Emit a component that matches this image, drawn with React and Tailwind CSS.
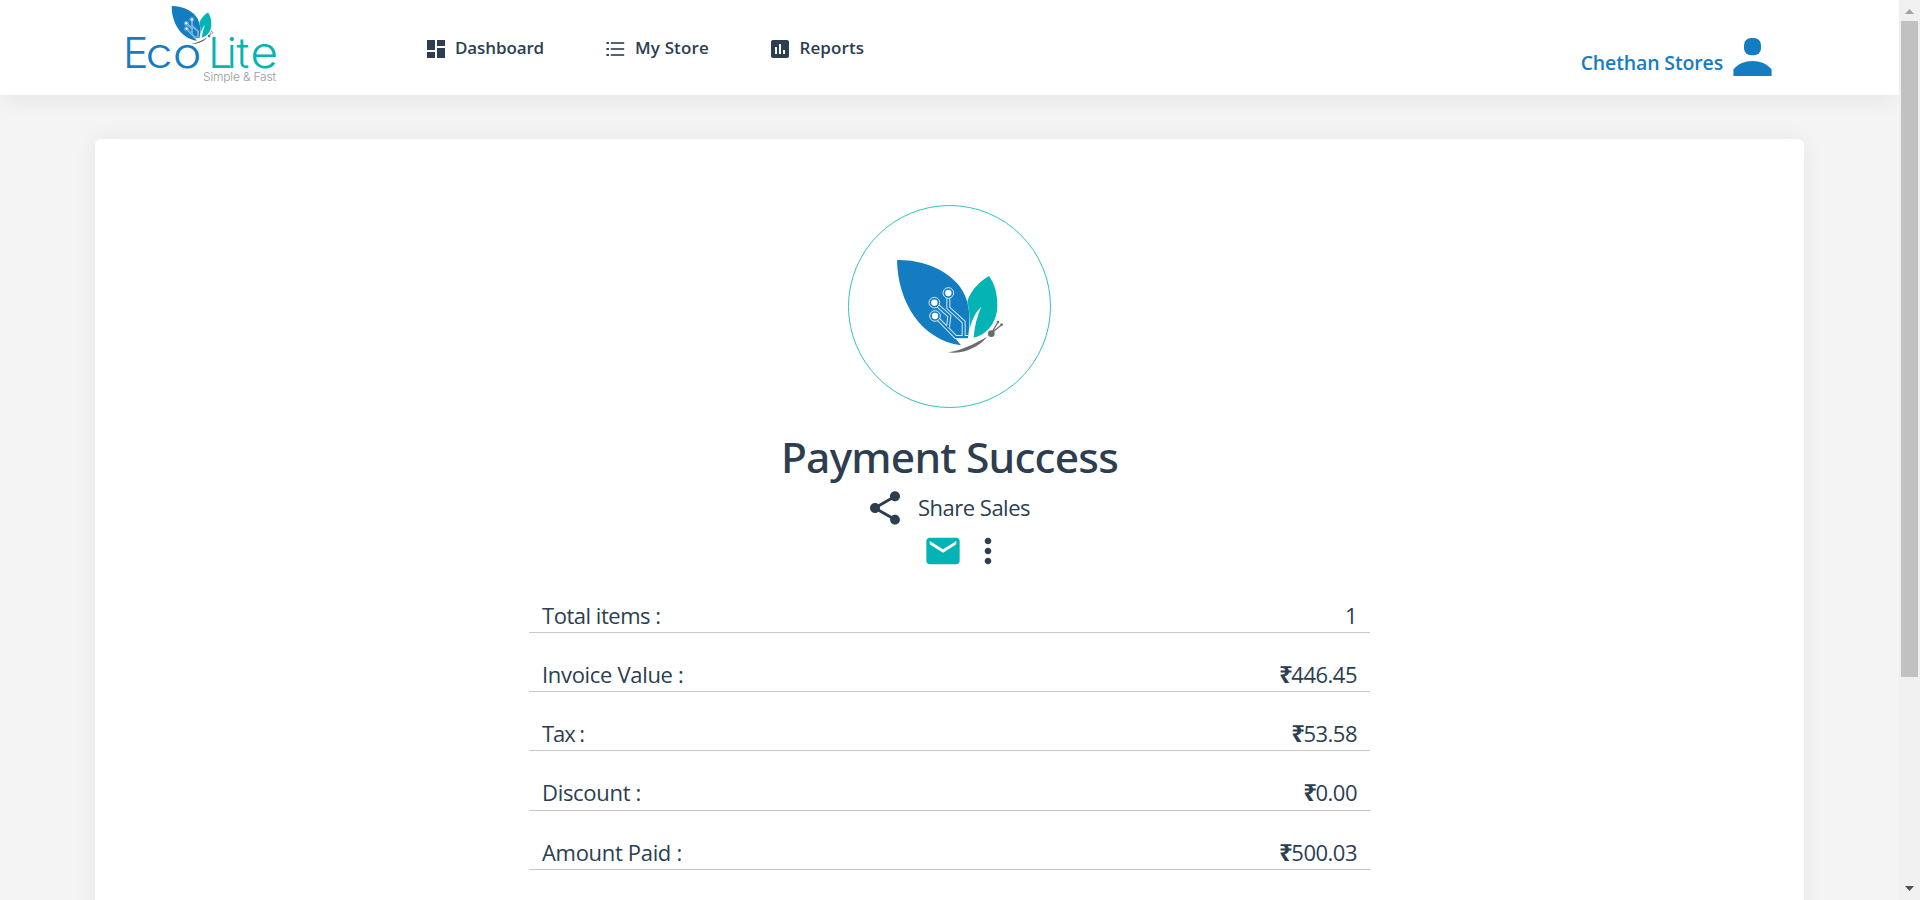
import {
  MdDashboard,
  MdAssessment,
  MdShare,
  MdMail,
  MdMoreVert,
} from "react-icons/md";

function ButterflyShapes() {
  const tracks = [
    "M204 172V204L250 246V291",
    "M173 198L207 228L203 262",
    "M175 239L226 291H263",
  ];
  return (
    <>
      <path
        fill="#147dc2"
        d="M50 60C125 59 195 88 233 133C258 163 268 200 267 240C267 262 265 280 263 293H224L242 316C125 300 52 190 50 60Z"
      />
      <path
        fill="#04b4b5"
        d="M326 108C290 128 265 163 261 186C267 210 269 235 268 268C275 238 285 217 303 200C290 230 282 260 280 293C325 283 352 240 351 195C351 160 343 132 326 108Z"
      />
      {tracks.map((d) => (
        <path key={d} d={d} fill="none" stroke="#d5e8f5" strokeWidth="12" />
      ))}
      {tracks.map((d) => (
        <path key={d} d={d} fill="none" stroke="#147dc2" strokeWidth="6" />
      ))}
      {[
        [204, 159],
        [162, 188],
        [164, 228],
      ].map(([x, y]) => (
        <g key={y}>
          <circle cx={x} cy={y} r="16" fill="#147dc2" stroke="#d5e8f5" strokeWidth="3" />
          <circle cx={x} cy={y} r="9.5" fill="#fff" />
        </g>
      ))}
      <path fill="#6a6b6d" d="M202 337C245 331 280 312 321 290C293 325 240 344 202 337Z" />
      <circle cx="333" cy="281" r="10" fill="#6a6b6d" />
      <path d="M333 280L353 246M333 280L364 254" stroke="#6a6b6d" strokeWidth="4" />
      <circle cx="353" cy="246" r="4" fill="#6a6b6d" />
      <circle cx="364" cy="254" r="4" fill="#6a6b6d" />
    </>
  );
}

function Logo() {
  return (
    <svg className="h-[90px] w-[160px] shrink-0" viewBox="120 0 160 90">
      <svg x="171.5" y="6" width="42" height="38" viewBox="50 60 317 280" preserveAspectRatio="none">
        <ButterflyShapes />
      </svg>
      <g fontFamily="Inter, sans-serif" fontSize="42.6" fontWeight="320">
        <text x="123" y="68" fill="#147dc2">
          E
        </text>
        <text transform="translate(145.5 68) scale(1.14 1)" fill="#147dc2">
          co
        </text>
        <text x="208.3" y="68" fill="#04b4b5">
          L
        </text>
        <text x="226.8 236.5" y="68" fill="#04b4b5">
          it
        </text>
        <text transform="translate(250.3 68) scale(1.13 1)" fill="#04b4b5">
          e
        </text>
      </g>
      <text
        x="203"
        y="81"
        fontFamily="Inter, sans-serif"
        fontSize="12"
        fontWeight="300"
        textLength="73"
        fill="#9a9a9a"
      >
        Simple &amp; Fast
      </text>
    </svg>
  );
}

function ListIcon() {
  return (
    <svg className="h-[18px] w-[19px]" viewBox="0 0 19 18" fill="#2c3e50">
      {[3, 9, 15].map((y) => (
        <g key={y}>
          <rect x="0.5" y={y - 1} width="2.4" height="2" />
          <rect x="4.8" y={y - 0.8} width="13.4" height="1.6" />
        </g>
      ))}
    </svg>
  );
}

function PersonIcon() {
  return (
    <svg className="h-[38px] w-[39px]" viewBox="0 0 39 38" fill="#147dc2">
      <rect x="11" y="0" width="17" height="17.3" rx="7" />
      <path d="M0.4 38V31.5C5 25.8 12 23 19.5 23S34 25.8 38.6 31.5V38Z" />
    </svg>
  );
}

const rows = [
  { label: "Total items :", value: "1", labelClass: "tracking-[-0.47px]", height: "h-[59px] pb-[2px]" },
  { label: "Invoice Value :", value: "446.45", rupee: true, labelClass: "tracking-[-0.32px]", height: "h-[59px] pb-[2px]" },
  { label: "Tax :", value: "53.58", rupee: true, labelClass: "tracking-[-1.05px]", height: "h-[59px] pb-[2px]" },
  { label: "Discount :", value: "0.00", rupee: true, labelClass: "tracking-[-0.3px]", height: "h-[60px] pb-[3px]" },
  { label: "Amount Paid :", value: "500.03", rupee: true, labelClass: "tracking-[-0.32px]", height: "h-[59px] pb-[2px]" },
];

function Header() {
  return (
    <header className="relative z-10 flex h-[95px] bg-white pl-[120px] shadow-[0_2px_24px_rgba(0,0,0,0.07)]">
      <Logo />
      <nav className="flex h-[96px] grow items-center pl-[144px] text-[17px] font-semibold">
        <span className="flex w-[179.5px] items-center">
          <MdDashboard className="mt-[2px] mr-[7px] h-6 w-6" />
          <span className="tracking-[-0.12px]">Dashboard</span>
        </span>
        <span className="flex w-[165px] items-center pl-[2.5px]">
          <span className="mt-[2px] mr-[10px]">
            <ListIcon />
          </span>
          <span className="tracking-[0.15px]">My Store</span>
        </span>
        <span className="flex items-center">
          <MdAssessment className="mt-[2px] mr-[7.5px] -ml-[0.5px] h-6 w-6" />
          <span className="tracking-[0.1px]">Reports</span>
        </span>
      </nav>
      <div className="flex pt-[38px] pr-[127px] text-[#147dc2]">
        <span className="mr-[10px] pt-[11px] text-[19.5px] leading-[28px] font-semibold tracking-[-0.14px]">
          Chethan Stores
        </span>
        <PersonIcon />
      </div>
    </header>
  );
}

function Scrollbar() {
  return (
    <div className="flex w-[21px] shrink-0 flex-col items-center bg-[#f0f0f0]">
      <svg className="h-[21px] w-[17px] shrink-0" viewBox="0 0 17 21">
        <path d="M4 14L8.5 9L13 14Z" fill="#a3a3a3" />
      </svg>
      <div className="h-[656px] w-[17px] bg-[#c1c1c1]" />
      <svg className="mt-auto h-[21px] w-[17px] shrink-0" viewBox="0 0 17 21">
        <path d="M4 7L8.5 12L13 7Z" fill="#505050" />
      </svg>
    </div>
  );
}

export default function App() {
  return (
    <div className="flex h-[900px] w-[1920px] overflow-hidden bg-[#f4f4f4] font-['Open_Sans','Noto_Sans',sans-serif] text-[#2c3e50]">
      <div className="flex grow flex-col overflow-hidden">
        <Header />
        <main className="mx-[95px] mt-[44px] flex h-[900px] shrink-0 flex-col items-center rounded-[6px] bg-white pt-[66px] shadow-[0_0_24px_rgba(0,0,0,0.06)]">
          <div className="flex h-[203px] w-[203px] shrink-0 rounded-full border border-[#2ec3c4] pt-[54px] pl-[48px]">
            <svg className="h-[93.3px] w-[105.7px]" viewBox="50 60 317 280">
              <ButterflyShapes />
            </svg>
          </div>
          <h1 className="mt-[19px] h-[60px] font-['Noto_Sans',sans-serif] text-[42.5px] leading-[60px] font-medium tracking-[-0.78px] whitespace-nowrap">
            Payment Success
          </h1>
          <div className="mt-[1px] ml-[-4px] flex h-[40px] items-center text-[22px]">
            <MdShare className="mr-[13px] h-10 w-10" />
            <span className="pb-[2px] tracking-[-0.5px]">Share Sales</span>
          </div>
          <div className="mt-[3px] ml-[32px] flex h-10 items-center">
            <MdMail className="mr-[5px] h-10 w-10 text-[#04b4b5]" />
            <MdMoreVert className="h-10 w-10" />
          </div>
          <div className="mt-[3px] flex w-[841px] flex-col text-[22px] leading-[30px]">
            {rows.map((row) => (
              <div
                key={row.label}
                className={`${row.height} flex items-end justify-between border-b border-[#c8c8c8] px-[13px]`}
              >
                <span className={row.labelClass}>{row.label}</span>
                <span className="flex items-baseline tracking-[-0.5px]">
                  {row.rupee && (
                    <span className="mr-[-1px] font-['Noto_Sans',sans-serif] text-[24px] leading-[30px] font-bold">
                      ₹
                    </span>
                  )}
                  {row.value}
                </span>
              </div>
            ))}
          </div>
        </main>
      </div>
      <Scrollbar />
    </div>
  );
}
